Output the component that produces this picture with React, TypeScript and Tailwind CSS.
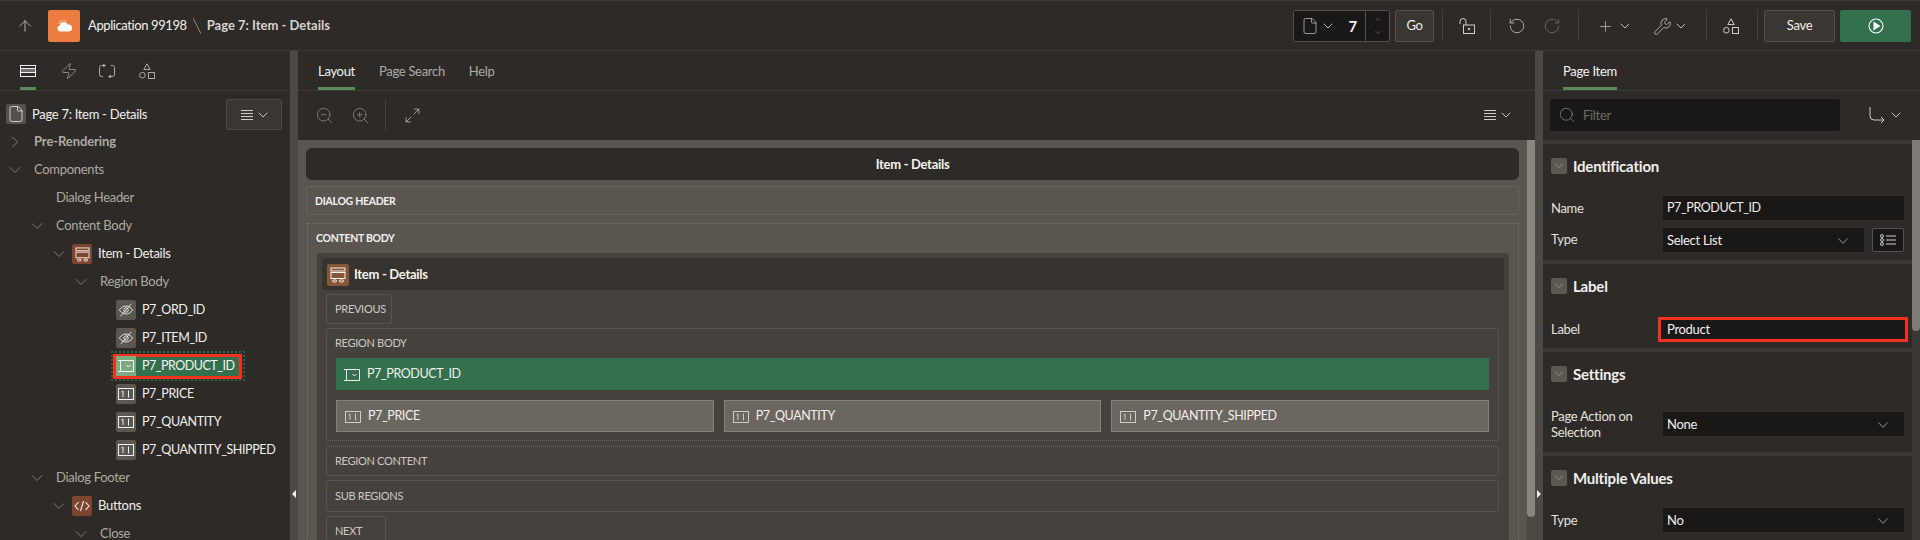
import React from 'react';
import { ArrowUp, ChevronDown, ChevronRight, ChevronUp, File, Maximize2, Plus, RotateCcw, RotateCw, Search, Wrench, Zap, ZoomIn, ZoomOut } from 'lucide-react';

const Shapes = ({ className = '' }: { className?: string }) => (
    <svg viewBox="0 0 16 16" className={className} fill="none" stroke="currentColor" strokeWidth="1">
        <path d="M8 .8 11.2 6.5H4.8Z" />
        <circle cx="3.4" cy="12.2" r="2.8" />
        <rect x="9.5" y="9.5" width="6" height="6" />
    </svg>
);

const Lines = () => (
    <svg viewBox="0 0 12 12" className="w-3 h-3" fill="none" stroke="currentColor" strokeWidth="1">
        <path d="M0 1.5h12M0 4.5h12M0 7.5h12M0 10.5h12" />
    </svg>
);

// lucide's chevron only fills half its box, so the box is pulled in to take 10px of flow
const Chev = ({ className = '' }: { className?: string }) => (
    <ChevronDown className={`w-4 h-4 -mx-[3px] shrink-0 ${className}`} strokeWidth={1.4} />
);

const MenuIcon = () => (
    <span className="flex items-center gap-[5px] text-[#d0cdc9]">
        <Lines />
        <Chev />
    </span>
);

const RegionGlyph = ({ className = '' }: { className?: string }) => (
    <svg viewBox="0 0 16 16" className={className} fill="none" stroke="currentColor" strokeWidth="1">
        <rect x="1" y="1" width="14" height="3" />
        <rect x="1" y="5.5" width="14" height="6" />
        <rect x="2.5" y="13" width="4" height="2" rx="1" />
        <rect x="9.5" y="13" width="4" height="2" rx="1" />
    </svg>
);

const HiddenGlyph = () => (
    <svg viewBox="0 0 18 16" className="w-4 h-4" fill="none" stroke="currentColor" strokeWidth="1">
        <path d="M1.5 8C4 4.8 6.3 3.5 9 3.5s5 1.300 7.500 4.500C14 11.200 11.700 12.500 9 12.500S4 11.200 1.500 8Z" />
        <circle cx="9" cy="8" r="2.500" />
        <path d="M15 1 3 15" />
    </svg>
);

const NumberGlyph = ({ className = 'w-4 h-4' }: { className?: string }) => (
    <svg viewBox="0 0 16 14" className={className} fill="none" stroke="currentColor" strokeWidth="1">
        <rect x=".5" y="1.500" width="15" height="11" />
        <path d="M3.500 5 5 4v6M10.500 3.500v7" />
    </svg>
);

const SelectGlyph = ({ className = 'w-4 h-4' }: { className?: string }) => (
    <svg viewBox="0 0 16 14" className={className} fill="none" stroke="currentColor" strokeWidth="1">
        <path d="M0 1.500h5M0 12.500h5M2.500 1.500v11M5 1.500h10.500v11H5" />
        <path d="m8.500 6 2 2 2-2" />
    </svg>
);

const CodeIcon = () => (
    <svg viewBox="0 0 16 12" className="w-4 h-3" fill="none" stroke="currentColor" strokeWidth="1.100">
        <path d="M4.500 2 1 6l3.500 4M11.500 2 15 6l-3.500 4M9.500 1l-3 10" />
    </svg>
);

const levels = ['pl-[7px]', 'pl-[29px]', 'pl-[51px]', 'pl-[73px]', 'pl-[95px]'];

// page item names sit narrower than Lato's capitals
const itemName = 'text-[12.5px] tracking-[-0.4px] whitespace-nowrap';

type TreeProps = {
    level: number;
    label: string;
    caret?: 'down' | 'right';
    icon?: React.ReactNode;
    tone?: string;
    bold?: boolean;
};

const TreeRow = ({ level, label, caret, icon, tone = 'bg-[#5b5751]', bold }: TreeProps) => (
    <div className={`h-7 flex items-center shrink-0 ${levels[level]}`}>
        <span className="w-4 flex justify-center text-[#8f8b85]">
            {caret === 'down' && <ChevronDown className="w-5 h-5 shrink-0" strokeWidth={1} />}
            {caret === 'right' && <ChevronRight className="w-5 h-5 shrink-0" strokeWidth={1} />}
        </span>
        {icon ? (
            <>
                <span className={`ml-[5px] w-5 h-5 shrink-0 rounded-[2px] flex items-center justify-center text-[#f1efed] ${tone}`}>{icon}</span>
                <span className={`ml-[6px] text-[#f1efed] ${level === 4 ? itemName : ''}`}>{label}</span>
            </>
        ) : (
            <span className={`ml-[11px] text-[#aeaaa4] ${bold ? 'font-bold tracking-[-0.1px]' : ''}`}>{label}</span>
        )}
    </div>
);

const SelectedRow = () => (
    <div className="h-7 flex items-center shrink-0 pl-[111px] relative">
        <div className="absolute left-[111px] top-[-1px] w-[134px] h-[30px] border-2 border-dotted border-[#2f5f44]" />
        <div className="relative ml-[2px] w-[129px] h-[25px] border-[3px] border-[#f0321e] bg-[#33704d] flex items-center text-[#f6f5f3]">
            <span className="w-5 h-5 shrink-0 bg-[#7fa980] flex items-center justify-center">
                <SelectGlyph />
            </span>
            <span className={`ml-[6px] tracking-[-0.5px] ${itemName}`}>P7_PRODUCT_ID</span>
        </div>
    </div>
);

const TabLink = ({ label, active }: { label: string; active?: boolean }) => (
    <div className={`h-full pt-[3px] flex items-center relative ${active ? 'text-[#f4f2f0]' : 'text-[#aeaaa4]'}`}>
        {label}
        {active && <span className="absolute left-0 right-0 bottom-0 h-[3px] bg-[#5a8a5c]" />}
    </div>
);

const Sep = () => <span className="block w-px h-8 bg-[#45413c]" />;

const Dropzone = ({ label, className = '', bright }: { label: string; className?: string; bright?: boolean }) => (
    <div className={`border border-dotted rounded-[3px] flex items-center pl-2 ${bright ? 'pt-[3px] text-[10.5px] border-[#76716a] text-[#f2f0ee] font-bold' : 'pt-px text-[11px] border-[#6b665f] text-[#cdc9c4]'} ${className}`}>
        {label}
    </div>
);

const Component = ({ label }: { label: string }) => (
    <div className="flex-1 h-8 pt-px bg-[#6b665f] border border-[#85807a] flex items-center pl-2 text-[#f2f0ee]">
        <span className="text-[#cfccc7] mr-[7px]"><NumberGlyph /></span>
        <span className={itemName}>{label}</span>
    </div>
);

const Section = ({ title, children, className = '' }: { title: string; children: React.ReactNode; className?: string }) => (
    <div className={`border-t-4 border-[#3c3834] pl-2 pr-2 ${className}`}>
        <div className="flex items-center gap-[6px] pt-[14px]">
            <span className="w-4 h-4 rounded-[2px] bg-[#5b5751] flex items-center justify-center text-[#aeaaa4]">
                <ChevronDown className="w-[14px] h-[14px]" strokeWidth={1.2} />
            </span>
            <span className="text-[15px] leading-4 font-bold tracking-[-0.2px] text-[#f1efed]">{title}</span>
        </div>
        {children}
    </div>
);

const Field = ({ label, value, select, caps, className = '' }: { label: string; value: string; select?: boolean; caps?: boolean; className?: string }) => (
    <div className={`flex items-center ${className}`}>
        <span className="w-[112px] leading-4 text-[#e4e1de]">{label}</span>
        <div className="flex-1 h-6 pt-px bg-[#191816] rounded-[2px] flex items-center justify-between pl-1 pr-3 text-[#f1efed]">
            <span className={caps ? itemName : ''}>{value}</span>
            {select && <ChevronDown className="w-[18px] h-[18px] text-[#c5c1bc]" strokeWidth={1} />}
        </div>
    </div>
);

export default function App() {
    return (
        <div className="w-[1920px] h-[540px] overflow-hidden bg-[#2d2a27] flex flex-col text-[13px] tracking-[-0.3px] font-['Lato',sans-serif]">
            {/* Header */}
            <div className="h-[51px] pt-px shrink-0 border-t border-b border-[#3d3935] flex items-center text-[#f1efed]">
                <ArrowUp className="ml-4 w-[18px] h-[18px] text-[#c5c1bc]" strokeWidth={1.2} />
                <div className="ml-[14px] w-8 h-8 rounded-[2px] bg-[#ec7c3f] flex items-center justify-center">
                    <svg viewBox="0 0 20 14" className="w-[17px] h-[12px]">
                        <path d="M5 13.500a3.500 3.500 0 0 1-.6-6.900A5 5 0 0 1 14 5.500a3.900 3.900 0 0 1 1.500 8Z" fill="#fff" />
                        <path d="M3.500 5A5 5 0 0 1 12 1.500" fill="none" stroke="#f5b58f" strokeWidth="1.400" />
                    </svg>
                </div>
                <span className="ml-2 tracking-[-0.4px]">Application 99198</span>
                <span className="ml-[6px] w-[9px] h-[16px] flex items-center">
                    <svg viewBox="0 0 8 16" className="w-2 h-4" stroke="#8f8b85" fill="none"><path d="M0 0l8 16" /></svg>
                </span>
                <span className="ml-[5px] font-bold tracking-[0px] text-[#d6d3cf]">Page 7: Item - Details</span>
                <div className="flex-1" />
                <div className="w-[97px] h-8 border border-[#55514c] rounded-[2px] bg-[#191816] flex items-center">
                    <File className="ml-[7px] w-[18px] h-[18px] text-[#c5c1bc]" strokeWidth={1} />
                    <Chev className="ml-[1px] text-[#c5c1bc]" />
                    <span className="ml-auto mr-2 text-[15px] font-bold">7</span>
                    <span className="w-[24px] h-full border-l border-[#55514c] flex flex-col items-center justify-center gap-[4px] text-[#aeaaa4]">
                        <ChevronUp className="w-[14px] h-[9px]" strokeWidth={1.1} />
                        <ChevronDown className="w-[14px] h-[9px]" strokeWidth={1.1} />
                    </span>
                </div>
                <div className="ml-[5px] w-[39px] h-8 rounded-[2px] border border-[#55514c] bg-[#3a3733] flex items-center justify-center text-[13px]">Go</div>
                <div className="ml-2"><Sep /></div>
                <svg viewBox="0 0 16 16" className="ml-[16px] w-4 h-4 text-[#d0cdc9]" fill="none" stroke="currentColor" strokeWidth="1">
                    <path d="M1 6V3.500a3 3 0 0 1 6 0V7" />
                    <rect x="4.500" y="7" width="11" height="8.500" />
                    <circle cx="10" cy="11" r=".8" fill="currentColor" />
                </svg>
                <div className="ml-[15px]"><Sep /></div>
                <RotateCcw className="ml-[17px] w-[18px] h-[18px] text-[#d0cdc9]" strokeWidth={1} />
                <RotateCw className="ml-[17px] w-[18px] h-[18px] text-[#78746e]" strokeWidth={1} />
                <div className="ml-[17px]"><Sep /></div>
                <Plus className="ml-[18px] w-[17px] h-[17px] text-[#aeaaa4]" strokeWidth={1.2} />
                <Chev className="ml-[3px] text-[#d0cdc9]" />
                <Wrench className="ml-[23px] w-[19px] h-[19px] text-[#d0cdc9]" strokeWidth={1} />
                <Chev className="ml-[1px] text-[#d0cdc9]" />
                <div className="ml-[20px]"><Sep /></div>
                <Shapes className="ml-[16px] w-4 h-4 text-[#d0cdc9]" />
                <div className="ml-[18px]"><Sep /></div>
                <div className="ml-[6px] w-[71px] h-8 rounded-[2px] border border-[#55514c] bg-[#3a3733] flex items-center justify-center text-[13px]">Save</div>
                <div className="ml-[5px] mr-[9px] w-[71px] h-8 rounded-[2px] bg-[#33704d] flex items-center justify-center">
                    <svg viewBox="0 0 16 16" className="w-4 h-4" fill="none" stroke="#fff" strokeWidth="1.100">
                        <circle cx="8" cy="8" r="7" />
                        <path d="M6 4.500v7l5.500-3.500Z" fill="#fff" />
                    </svg>
                </div>
            </div>

            <div className="flex-1 flex min-h-0">
                {/* Left pane */}
                <div className="w-[290px] shrink-0 flex flex-col overflow-hidden">
                    <div className="h-10 shrink-0 border-b border-[#3d3935] flex text-[#aeaaa4] pl-5">
                        <div className="relative h-full w-4 flex items-center justify-center text-[#f1efed]">
                            <svg viewBox="0 0 16 12" className="w-4 h-3" fill="none" stroke="currentColor" strokeWidth="1">
                                <rect x=".5" y=".5" width="15" height="11" />
                                <rect x=".5" y="3.500" width="15" height="4" fill="currentColor" fillOpacity=".35" />
                            </svg>
                            <span className="absolute left-0 right-0 bottom-0 h-[3px] bg-[#5a8a5c]" />
                        </div>
                        <div className="ml-[24px] h-full flex items-center"><Zap className="w-[18px] h-[18px]" strokeWidth={1} /></div>
                        <div className="ml-[21px] h-full flex items-center">
                            <svg viewBox="0 0 16 14" className="w-4 h-[14px]" fill="none" stroke="currentColor" strokeWidth="1">
                                <path d="M6 1.500H2.500A2 2 0 0 0 .5 3.500v7a2 2 0 0 0 2 2H4M10 12.500h3.500a2 2 0 0 0 2-2v-7a2 2 0 0 0-2-2H12" />
                                <path d="M4 0 6.500 1.500 4 3M12 11l-2.500 1.500L12 14" />
                            </svg>
                        </div>
                        <div className="ml-[24px] h-full flex items-center"><Shapes className="w-4 h-4" /></div>
                    </div>
                    <div className="h-[37px] shrink-0 flex items-start pl-[6px]">
                        <span className="mt-[13px] w-5 h-5 rounded-[2px] bg-[#55514c] flex items-center justify-center text-[#f1efed]">
                            <File className="w-[18px] h-[18px]" strokeWidth={1} />
                        </span>
                        <span className="ml-[6px] mt-[13px] leading-5 text-[#f1efed]">Page 7: Item - Details</span>
                        <div className="ml-auto mr-2 mt-2 w-[56px] h-[31px] rounded-[2px] border border-[#4b4742] bg-[#3a3733] flex items-center justify-center">
                            <MenuIcon />
                        </div>
                    </div>
                    <TreeRow level={0} label="Pre-Rendering" caret="right" bold />
                    <TreeRow level={0} label="Components" caret="down" />
                    <TreeRow level={1} label="Dialog Header" />
                    <TreeRow level={1} label="Content Body" caret="down" />
                    <TreeRow level={2} label="Item - Details" caret="down" icon={<RegionGlyph className="w-[15px] h-[15px]" />} tone="bg-[#7c452e]" />
                    <TreeRow level={3} label="Region Body" caret="down" />
                    <TreeRow level={4} label="P7_ORD_ID" icon={<HiddenGlyph />} />
                    <TreeRow level={4} label="P7_ITEM_ID" icon={<HiddenGlyph />} />
                    <SelectedRow />
                    <TreeRow level={4} label="P7_PRICE" icon={<NumberGlyph />} />
                    <TreeRow level={4} label="P7_QUANTITY" icon={<NumberGlyph />} />
                    <TreeRow level={4} label="P7_QUANTITY_SHIPPED" icon={<NumberGlyph />} />
                    <TreeRow level={1} label="Dialog Footer" caret="down" />
                    <TreeRow level={2} label="Buttons" caret="down" icon={<CodeIcon />} tone="bg-[#7c452e]" />
                    <TreeRow level={3} label="Close" caret="down" />
                </div>

                <div className="w-2 shrink-0 bg-[#4c4843] relative">
                    <span className="absolute left-[2px] top-[439px] w-0 h-0 border-y-[4px] border-y-transparent border-r-[4px] border-r-[#f1efed]" />
                </div>

                {/* Center pane */}
                <div className="flex-1 min-w-0 flex flex-col">
                    <div className="h-10 shrink-0 border-b border-[#3d3935] flex gap-6 pl-5">
                        <TabLink label="Layout" active />
                        <TabLink label="Page Search" />
                        <TabLink label="Help" />
                    </div>
                    <div className="h-[49px] shrink-0 flex items-start pt-2 text-[#8f8b85]">
                        <div className="h-8 flex items-center pl-[17px] w-full">
                            <ZoomOut className="w-[19px] h-[19px]" strokeWidth={1} />
                            <ZoomIn className="ml-[17px] w-[19px] h-[19px]" strokeWidth={1} />
                            <span className="ml-[15px] w-px h-8 bg-[#45413c]" />
                            <Maximize2 className="ml-[18px] w-[17px] h-[17px] text-[#d0cdc9]" strokeWidth={1} />
                            <div className="ml-auto mr-[24px]"><MenuIcon /></div>
                        </div>
                    </div>
                    <div className="flex-1 min-h-0 flex overflow-hidden">
                        <div className="flex-1 bg-[#5a554f] pl-2 pr-2 pt-2 flex flex-col overflow-hidden">
                            <div className="h-8 pt-px shrink-0 rounded-md bg-[#2e2a27] flex items-center justify-center font-bold text-[#f4f2f0]">Item - Details</div>
                            <Dropzone label="DIALOG HEADER" bright className="mt-[6px] h-[29px] shrink-0" />
                            <div className="mt-2 ml-px flex-1 border border-dotted border-[#76716a] px-[9px] pt-[5px] flex flex-col">
                                <div className="h-5 shrink-0 flex items-center -ml-px text-[10.5px] font-bold text-[#f2f0ee]">CONTENT BODY</div>
                                <div className="mt-1 flex-1 bg-[#45423d] p-[5px] rounded-t-[3px]">
                                    <div className="h-8 pt-px rounded-[3px] bg-[#37332e] flex items-center pl-[5px] font-bold text-[#f4f2f0]">
                                        <span className="w-[22px] h-[22px] rounded-[2px] bg-[#85563a] flex items-center justify-center">
                                            <RegionGlyph className="w-4 h-4" />
                                        </span>
                                        <span className="ml-[5px]">Item - Details</span>
                                    </div>
                                    <div className="pl-1 pr-[5px]">
                                        <Dropzone label="PREVIOUS" className="mt-1 w-[66px] h-[30px]" />
                                        <div className="mt-[4px] h-[113px] border border-dotted border-[#6b665f] rounded-[3px] px-[9px]">
                                            <div className="h-[29px] flex items-center text-[11px] text-[#cdc9c4] -ml-px">REGION BODY</div>
                                            <div className="h-8 pt-px bg-[#33704d] flex items-center pl-2 text-[#f2f0ee]">
                                                <span className="mr-[7px]"><SelectGlyph /></span>
                                                <span className={itemName}>P7_PRODUCT_ID</span>
                                            </div>
                                            <div className="mt-[10px] flex gap-[10px]">
                                                <Component label="P7_PRICE" />
                                                <Component label="P7_QUANTITY" />
                                                <Component label="P7_QUANTITY_SHIPPED" />
                                            </div>
                                        </div>
                                        <Dropzone label="REGION CONTENT" className="mt-[5px] h-[30px]" />
                                        <Dropzone label="SUB REGIONS" className="mt-[4px] h-[32px]" />
                                        <Dropzone label="NEXT" className="mt-[4px] w-[60px] h-[30px]" />
                                    </div>
                                </div>
                            </div>
                        </div>
                        <div className="w-2 shrink-0 bg-[#4c4843] flex">
                            <span className="w-2 h-[377px] rounded-b-md bg-[#8a8580]" />
                        </div>
                    </div>
                </div>

                <div className="w-2 shrink-0 bg-[#4c4843] relative">
                    <span className="absolute left-[2px] top-[439px] w-0 h-0 border-y-[4px] border-y-transparent border-l-[4px] border-l-[#f1efed]" />
                </div>

                {/* Right pane */}
                <div className="w-[377px] shrink-0 flex flex-col overflow-hidden">
                    <div className="h-10 shrink-0 border-b border-[#3d3935] flex pl-5">
                        <TabLink label="Page Item" active />
                    </div>
                    <div className="h-[49px] shrink-0 flex items-start pt-2 pl-[7px]">
                        <div className="w-[290px] h-8 rounded-[2px] bg-[#191816] flex items-center pl-2 text-[#6f6b66]">
                            <Search className="w-[18px] h-[18px] text-[#8f8b85]" strokeWidth={1} />
                            <span className="ml-[7px] pt-px">Filter</span>
                        </div>
                        <div className="ml-[29px] h-8 flex items-center text-[#d0cdc9]">
                            <svg viewBox="0 0 16 16" className="w-4 h-4" fill="none" stroke="currentColor" strokeWidth="1">
                                <path d="M1 0v9a4 4 0 0 0 4 4h10M12 10l3 3-3 3" />
                            </svg>
                            <Chev className="ml-[3px]" />
                        </div>
                    </div>
                    <div className="flex-1 min-h-0 flex overflow-hidden">
                        <div className="w-[369px] shrink-0">
                            <Section title="Identification" className="h-[120px]">
                                <Field label="Name" value="P7_PRODUCT_ID" caps className="mt-[22px]" />
                                <div className="mt-2 flex items-center">
                                    <span className="w-[112px] text-[#e4e1de]">Type</span>
                                    <div className="flex-1 h-6 pt-px bg-[#191816] rounded-[2px] flex items-center justify-between pl-1 pr-3 text-[#f1efed]">
                                        Select List
                                        <ChevronDown className="w-[18px] h-[18px] text-[#c5c1bc]" strokeWidth={1} />
                                    </div>
                                    <div className="ml-2 w-8 h-6 rounded-[2px] bg-[#191816] border border-[#55514c] flex items-center justify-center text-[#d0cdc9]">
                                        <svg viewBox="0 0 16 12" className="w-4 h-3" fill="none" stroke="currentColor" strokeWidth="1">
                                            <circle cx="2" cy="2" r="1.500" /><circle cx="2" cy="6" r="1.500" /><circle cx="2" cy="10" r="1.500" />
                                            <path d="M6 2h10M6 6h10M6 10h10" />
                                        </svg>
                                    </div>
                                </div>
                            </Section>
                            <Section title="Label" className="h-[88px]">
                                <div className="mt-[23px] flex items-center">
                                    <span className="w-[107px] shrink-0 text-[#e4e1de]">Label</span>
                                    <div className="w-[250px] shrink-0 h-[25px] border-[3px] border-[#f0321e] bg-[#191816] flex items-center pl-[6px] text-[#f1efed]">Product</div>
                                </div>
                            </Section>
                            <Section title="Settings" className="h-[104px]">
                                <Field label="Page Action on Selection" value="None" select className="mt-[26px]" />
                            </Section>
                            <Section title="Multiple Values">
                                <Field label="Type" value="No" select className="mt-[22px]" />
                            </Section>
                        </div>
                        <div className="w-2 shrink-0 bg-[#3a3733]">
                            <span className="block w-2 h-[191px] rounded-b-md bg-[#7e7a75]" />
                        </div>
                    </div>
                </div>
            </div>
        </div>
    );
}
